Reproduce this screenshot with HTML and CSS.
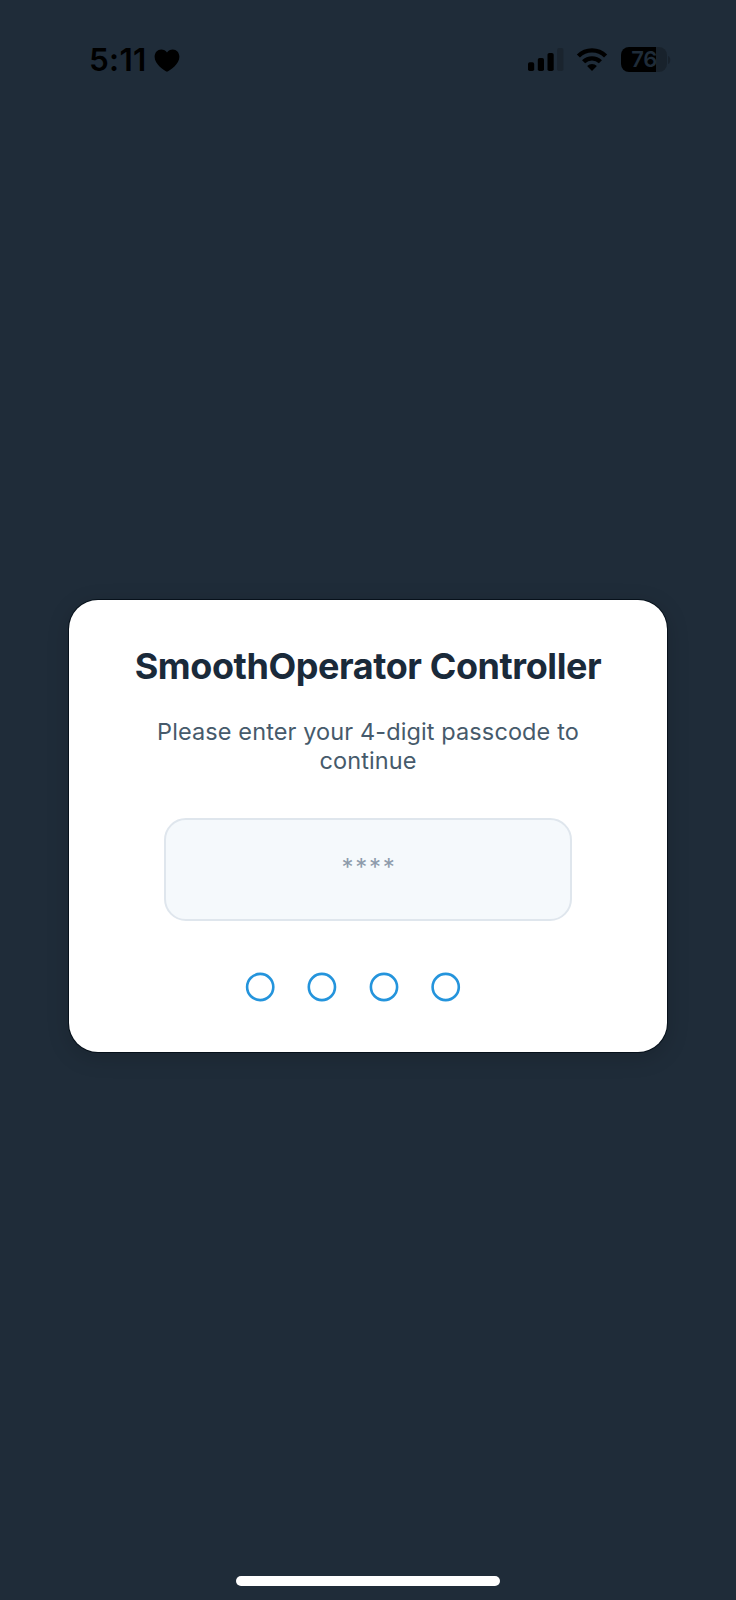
FILE: index.html
```
<!DOCTYPE html>
<html lang="en">
<head>
<meta charset="utf-8">
<title>SmoothOperator Controller</title>
<link rel="stylesheet" href="styles.css">
</head>
<body>
<div class="screen">
  <header class="status">
    <div class="clock">
      <span class="time">5:11</span>
      <svg class="heart" width="26" height="23" viewBox="0 0 26 23"><path d="M13 22.8C9.6 21.2 0.6 15.2 0.6 7.8C0.6 3.4 3.6 0.4 7.2 0.4C9.7 0.4 11.8 1.6 13 3.6C14.2 1.6 16.3 0.4 18.8 0.4C22.4 0.4 25.4 3.4 25.4 7.8C25.4 15.2 16.4 21.2 13 22.8Z"/></svg>
    </div>
    <div class="indicators">
      <svg class="signal" width="36" height="24" viewBox="0 0 36 24"><rect x="0" y="14.3" width="6.2" height="8.7" rx="1.8"/><rect x="9.8" y="10" width="6.2" height="13" rx="1.8"/><rect x="19.5" y="5" width="6.2" height="18" rx="1.8"/><rect class="faint" x="29.2" y="0" width="6.2" height="23" rx="1.8"/></svg>
      <svg class="wifi" width="32" height="24" viewBox="0 0 32 24"><path d="M2.4 8a19.2 19.2 0 0 1 27.2 0M7.6 13.8a11.9 11.9 0 0 1 16.8 0"/><path class="dot" d="M16 22.9l-4.9-4.9a7 7 0 0 1 9.8 0z"/></svg>
      <div class="battery"><span class="level">76</span></div>
      <svg class="tip" width="3" height="8" viewBox="0 0 3 8"><path d="M0 0c3 1 3 7 0 8z"/></svg>
    </div>
  </header>
  <main class="card">
    <h1 class="title">SmoothOperator Controller</h1>
    <p class="subtitle">Please enter your 4-digit passcode to<br>continue</p>
    <div class="field"><span class="placeholder">****</span></div>
    <svg class="dots" width="216" height="30" viewBox="0 0 216 30"><circle cx="15.2" cy="15" r="13.1"/><circle cx="76.9" cy="15" r="13.1"/><circle cx="139" cy="15" r="13.1"/><circle cx="200.7" cy="15" r="13.1"/></svg>
  </main>
  <div class="home"></div>
</div>
</body>
</html>
```
FILE: styles.css
```
* { box-sizing: border-box; }
body { margin: 0; background: #1f2c39; font-family: Inter, "Liberation Sans", sans-serif; }
.screen { height: 1600px; display: flex; flex-direction: column; align-items: center; overflow: hidden; }
.status { width: 100%; height: 120px; flex: none; padding: 40px 65px 0 89px; display: flex; justify-content: space-between; align-items: flex-start; }
.clock { display: flex; align-items: flex-start; height: 40px; }
.time { width: 65px; font-size: 31.5px; line-height: 40px; font-weight: 600; letter-spacing: 0.3px; color: #000; }
.heart { margin-top: 9px; }
.indicators { display: flex; align-items: flex-start; padding-top: 8px; }
.signal, .wifi { display: block; }
.faint { fill: #1a242e; }
.wifi { margin: 0 13px 0 12px; }
.wifi path { fill: none; stroke: #000; stroke-width: 4.4; }
.wifi .dot { fill: #000; stroke: none; }
.battery { width: 46px; height: 25px; margin-top: -1px; border-radius: 8px; background: linear-gradient(90deg, #000 35px, #18222c 35px); text-align: center; }
.level { display: block; font-size: 22px; line-height: 25px; font-weight: 600; color: #1f2c39; letter-spacing: -0.5px; }
.tip { margin: 8px 0 0 1px; fill: #18222c; }
.card { width: 597.5px; height: 452px; margin-top: 480px; flex: none; border-radius: 29px; background: #fff; box-shadow: 0 0 0 1px #07111b, 0 5px 22px rgba(0, 0, 0, 0.17); display: flex; flex-direction: column; align-items: center; }
.title { margin: 44px 0 0; font-size: 36px; line-height: 44px; font-weight: 700; letter-spacing: -0.42px; color: #1a2a3a; white-space: nowrap; }
.subtitle { margin: 29px 0 0; font-size: 23.5px; line-height: 29px; font-weight: 400; letter-spacing: 0.11px; color: #465a6b; text-align: center; white-space: nowrap; }
.field { width: 408px; height: 103px; margin-top: 43px; border: 2px solid #dfe6ed; border-radius: 22px; background: #f5f9fc; display: flex; justify-content: center; align-items: center; }
.placeholder { padding-left: 2px; font-size: 24px; line-height: 30px; margin-top: -3px; color: #8d9bab; letter-spacing: 1.7px; }
.dots { margin: 51px 30px 0 0; fill: none; stroke: #2494dc; stroke-width: 2.6px; }
.home { width: 264px; height: 10px; margin-top: 523.5px; border-radius: 5px; background: #fff; flex: none; }
```
